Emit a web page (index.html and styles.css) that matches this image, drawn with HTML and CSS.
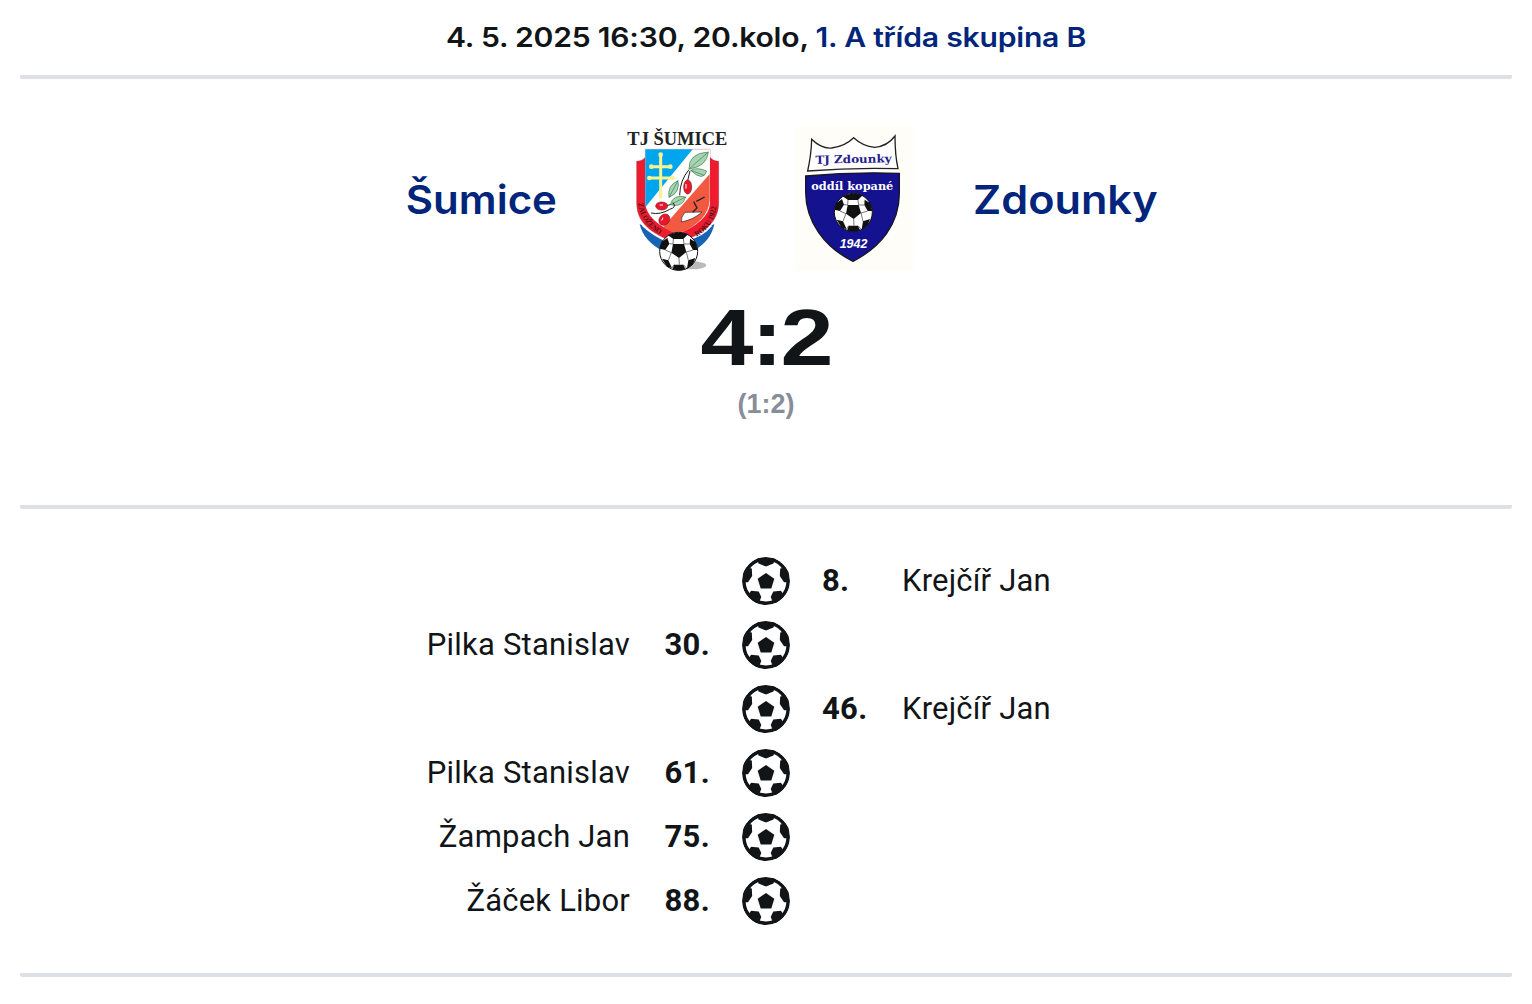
FILE: index.html
```html
<!DOCTYPE html>
<html lang="cs">
<head>
  <meta charset="UTF-8" />
  <meta name="viewport" content="width=device-width, initial-scale=1.0"/>
  <title>Šumice – Zdounky</title>
  <link rel="stylesheet" href="styles.css">
</head>
<body>

<!-- shared symbols -->
<svg class="symbols" aria-hidden="true">
  <symbol id="goal" viewBox="0 0 48 48">
    <circle cx="24" cy="24" r="22.2" fill="#fff" stroke="#111518" stroke-width="3.6"/>
    <g fill="#111518">
      <path d="M24 16l8.300 5.700-3 9.800H18.700l-3-9.800z"/>
      <path d="M15 1h18l-1.500 5.500L24 9.500l-7.500-3z"/>
      <path d="M1 15L4.500 10.500l5.300 1 .400 7.500L6 25.200H1z"/>
      <path d="M47 15L43.500 10.500l-5.300 1-.400 7.500L42 25.200H47z"/>
      <path d="M6.500 38L9 33.700l7.700.700L19.300 40l-2.300 5.500-4 .200z"/>
      <path d="M41.500 38L39 33.700l-7.700.700L28.700 40l2.300 5.500 4 .200z"/>
    </g>
  </symbol>
  <symbol id="football" viewBox="-60 -60 120 120">
    <circle r="57" fill="#fff" stroke="#111" stroke-width="3"/>
    <g fill="#111">
      <path d="M-17-22L16-22 23 2 1 20-22 4z"/>
      <path d="M-32-48Q0-64 28-51L14-37-16-37z"/>
      <path d="M-57-8L-52-27-34-40-28-23-40-4z"/>
      <path d="M34-38L51-27 57-4 43-4 33-22z"/>
      <path d="M-50 22L-31 27-20 50-35 46z"/>
      <path d="M29 27L50 20 43 39 25 52z"/>
      <path d="M-14 40L14 40 20 54Q0 61-18 54z"/>
    </g>
    <path d="M-17-22L-16-37M16-22L14-37M23 2L43-4M1 20L2 40M-22 4L-40-4M-28-23L-17-22M33-22L16-22M-31 27L-22 4M-20 50L-14 40M29 27L23 2M25 52L14 40" fill="none" stroke="#333" stroke-width="2"/>
  </symbol>
</svg>

<div class="match">
  <h2 class="info"><span class="wide">4. 5. 2025 16:30, 20.kolo, <a href="#">1. A třída skupina B</a></span></h2>

  <div class="summary">
    <div class="teams">
      <a class="team home" href="#"><span class="wide">Šumice</span></a>
      <div class="logo">
        <svg width="112" height="144" viewBox="35 21 336 432">
          <ellipse cx="242" cy="436" rx="46" ry="12" fill="#bbb"/>
          <path d="M88 312Q98 363 165 398L170 360zM312 312Q302 363 250 392L235 350z" fill="#1764b5"/>
          <path d="M95 318Q130 350 172 367L230 362Q280 350 305 318L290 300 110 300z" fill="#fff"/>
          <path d="M79 124Q96 124 105 112V88H299V112Q309 124 325 124V250C325 320 255 350 202 370C145 350 79 320 79 250z" fill="#ed1c2e" stroke="#8b1822" stroke-width="1"/>
          <path d="M105 88H299V250Q295 305 202 342Q109 305 105 250z" fill="#fff"/>
          <path d="M105 88H247L105 262z" fill="#00a6ed"/>
          <path d="M298 162V240Q295 305 202 342Q175 332 158 322z" fill="#f15a40"/>
          <g fill="none" stroke="#f7f391" stroke-width="9">
            <path d="M151 101V235M122 140H181M115 174H188"/>
          </g>
          <g fill="#f7f391">
            <circle cx="151" cy="104" r="7"/><circle cx="123" cy="140" r="7"/><circle cx="180" cy="140" r="7"/>
            <circle cx="117" cy="174" r="7"/><circle cx="186" cy="174" r="7"/>
          </g>
          <g fill="#a8d5b0" stroke="#3d7a58" stroke-width="2">
            <path d="M236 147Q234 100 294 96Q290 140 236 147zM294 96L236 147M241 151Q260 140 289 153Q279 187 241 151zM241 151L280 165"/>
            <path d="M176 232Q170 196 203 182Q210 218 176 232zM203 182L176 232M180 254Q188 222 226 231Q216 264 180 254zM226 231L180 254"/>
          </g>
          <path d="M122 279Q150 285 178 268Q200 262 188 248M208 226Q209 180 236 149M232 182L239 153M155 260L180 254" fill="none" stroke="#1d1d1d" stroke-width="3"/>
          <g fill="#e8172b" stroke="#8b1822" stroke-width="2">
            <ellipse cx="232" cy="201" rx="12" ry="21"/>
            <ellipse cx="154" cy="258" rx="18" ry="12"/>
            <ellipse cx="162" cy="299" rx="15" ry="18" transform="rotate(40 162 299)"/>
          </g>
          <path d="M227 192V206M148 255H158M158 293L154 302" stroke="#fff" stroke-width="3"/>
          <path d="M213 306Q211 292 224 277L275 276Q252 298 213 306z" fill="#fff" stroke="#222" stroke-width="2"/>
          <path d="M247 277L260 264 250 245M258 244L283 231" fill="none" stroke="#222" stroke-width="4"/>
          <path id="founded" d="M83 250Q91 313 158 350" fill="none"/>
          <path id="year" d="M258 350Q315 318 318 252" fill="none"/>
          <text class="motto"><textPath href="#founded" textLength="118" lengthAdjust="spacingAndGlyphs">ZALOŽENO</textPath></text>
          <text class="motto"><textPath href="#year" textLength="112" lengthAdjust="spacingAndGlyphs">ROKU 1922</textPath></text>
          <text class="club-title" x="51" y="76" textLength="300" lengthAdjust="spacingAndGlyphs">TJ ŠUMICE</text>
          <use href="#football" x="145" y="334" width="120" height="120"/>
        </svg>
      </div>
      <div class="logo">
        <svg width="120" height="144" viewBox="28 21 360 432">
          <rect x="31" y="21" width="354" height="432" fill="#fffdf7"/>
          <path d="M81 58Q110 87 141 84Q182 78 207 53Q235 79 270 82Q308 79 331 48Q331 105 340 146Q205 142 69 153Q80 103 81 58z" fill="#fff" stroke="#222" stroke-width="4"/>
          <path d="M63 168Q205 155 344 160V220C344 315 285 383 205 424C120 382 63 306 63 215z" fill="#15128f" stroke="#171525" stroke-width="4"/>
          <text class="zd-title" x="92" y="129" textLength="229" lengthAdjust="spacingAndGlyphs" transform="rotate(-1 205 120)">TJ Zdounky</text>
          <text class="zd-sub" x="80" y="210" textLength="246" lengthAdjust="spacingAndGlyphs">oddíl kopané</text>
          <use href="#football" x="146" y="217" width="120" height="120"/>
          <text class="zd-year" x="165" y="385" textLength="83" lengthAdjust="spacingAndGlyphs">1942</text>
        </svg>
      </div>
      <a class="team away" href="#"><span class="wide">Zdounky</span></a>
    </div>
    <div class="score"><span class="wide">4:2</span></div>
    <div class="halftime">(1:2)</div>
  </div>

  <ul class="events">
    <li>
      <svg class="ball"><use href="#goal"/></svg>
      <b class="time">8.</b>
      <span class="player">Krejčíř Jan</span>
    </li>
    <li class="left">
      <span class="player">Pilka Stanislav</span>
      <b class="time">30.</b>
      <svg class="ball"><use href="#goal"/></svg>
    </li>
    <li>
      <svg class="ball"><use href="#goal"/></svg>
      <b class="time">46.</b>
      <span class="player">Krejčíř Jan</span>
    </li>
    <li class="left">
      <span class="player">Pilka Stanislav</span>
      <b class="time">61.</b>
      <svg class="ball"><use href="#goal"/></svg>
    </li>
    <li class="left">
      <span class="player">Žampach Jan</span>
      <b class="time">75.</b>
      <svg class="ball"><use href="#goal"/></svg>
    </li>
    <li class="left">
      <span class="player">Žáček Libor</span>
      <b class="time">88.</b>
      <svg class="ball"><use href="#goal"/></svg>
    </li>
  </ul>
</div>

</body>
</html>
```
FILE: styles.css
```css
* {
  box-sizing: border-box;
}

body {
  margin: 0;
  background: #fff;
  color: #111518;
  font-family: Roboto, "Liberation Sans", sans-serif;
}

a {
  color: #00257b;
  text-decoration: none;
}

.symbols {
  display: none;
}

.match {
  margin: 0 20px;
}

.wide {
  display: inline-block;
  white-space: nowrap;
}

.info,
.team {
  font-family: Inter, "Liberation Sans", sans-serif;
  font-feature-settings: "calt" 0;
}

.info {
  margin: 0;
  height: 79px;
  border-bottom: 4px solid #dee0e6;
  border-radius: 2px;
  text-align: center;
  font-size: 27px;
  font-weight: 600;
  line-height: 76px;
}

.info .wide {
  letter-spacing: -0.2px;
  transform: scaleX(1.115);
}

.summary {
  height: 430px;
  padding-top: 48px;
  border-bottom: 4px solid #dee0e6;
  border-radius: 2px;
  text-align: center;
}

.teams {
  display: grid;
  grid-template-columns: 1fr 144px 144px 1fr;
  column-gap: 32px;
  align-items: center;
}

.logo {
  display: flex;
  justify-content: center;
  height: 144px;
}

.logo svg {
  overflow: visible;
}

.team {
  padding-top: 1px;
  font-size: 40px;
  font-weight: 600;
  line-height: 50px;
}

.home {
  padding-right: 17px;
  text-align: right;
}

.home .wide {
  transform: scaleX(1.05);
  transform-origin: right;
}

.away {
  padding-left: 15px;
  text-align: left;
}

.away .wide {
  transform: scaleX(1.08);
  transform-origin: left;
}

.score,
.halftime {
  font-family: "Liberation Sans", Arial, sans-serif;
  font-weight: 700;
}

.score {
  margin-top: 23px;
  font-size: 80px;
  line-height: 88px;
}

.score .wide {
  letter-spacing: -2px;
  transform: scaleX(1.19);
}

.halftime {
  margin-top: 6px;
  color: #878e99;
  font-size: 27px;
  line-height: 32px;
}

.events {
  display: flex;
  flex-direction: column;
  gap: 16px;
  margin: 0;
  padding: 48px 0;
  border-bottom: 4px solid #dee0e6;
  border-radius: 2px;
  list-style: none;
}

.events li {
  display: flex;
  align-items: center;
  width: 770px;
  height: 48px;
  margin-left: auto;
  font-size: 31px;
}

.events .left {
  justify-content: flex-end;
  margin-left: 0;
}

.ball {
  width: 48px;
  height: 48px;
  border-radius: 50%;
}

.player {
  padding-bottom: 2px;
  letter-spacing: 0.2px;
}

.time {
  width: 80px;
  margin-left: 32px;
  padding-bottom: 2px;
  font-weight: 700;
  letter-spacing: 0.3px;
}

.left .time {
  margin: 0 32px 0 0;
  text-align: right;
}

/* club badges */
.club-title {
  font: bold 58px "Liberation Serif", serif;
  fill: #222;
}

.motto {
  font: bold 23px "Liberation Serif", serif;
  fill: #4b1018;
}

.zd-title {
  font: bold 33px "DejaVu Serif", serif;
  fill: #25208e;
}

.zd-sub {
  font: bold 34px "DejaVu Serif", serif;
  fill: #fff;
}

.zd-year {
  font: italic bold 37px "Liberation Sans", sans-serif;
  fill: #fff;
}
```
